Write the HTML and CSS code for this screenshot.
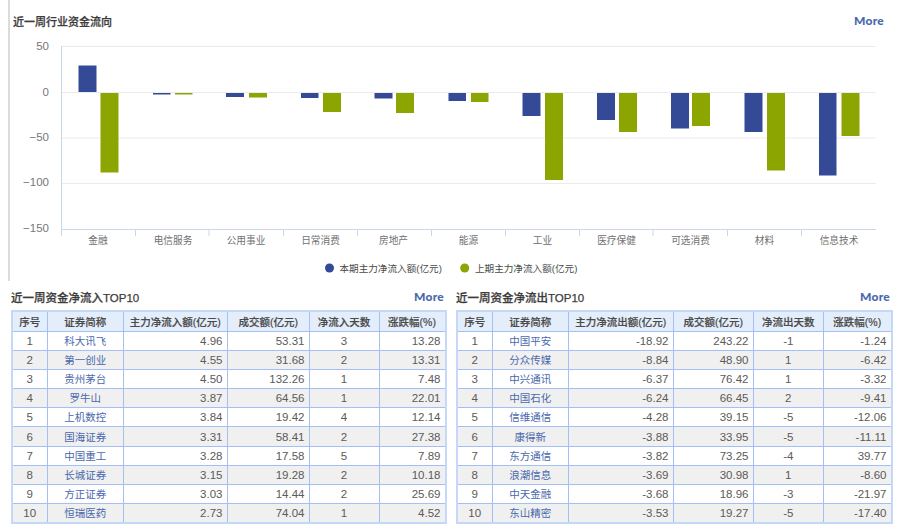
FILE: index.html
```html
<!DOCTYPE html>
<html lang="zh-CN">
<head>
  <meta charset="UTF-8" />
  <title>资金流向</title>
  <link rel="stylesheet" href="styles.css">
</head>
<body>

<!-- 行业资金流向 -->
<div class="chart-panel">
  <div class="panel-head chart-head">
    <h2>近一周行业资金流向</h2>
    <a class="more">More</a>
  </div>
  <svg class="chart" width="890" height="245" viewBox="10 36 890 245">
    <g class="grid">
      <line x1="61.5" y1="46.5" x2="876" y2="46.5"/>
      <line x1="61.5" y1="92.5" x2="876" y2="92.5"/>
      <line x1="61.5" y1="138" x2="876" y2="138"/>
      <line x1="61.5" y1="183.5" x2="876" y2="183.5"/>
    </g>
    <g class="axis">
      <line x1="61.5" y1="46" x2="61.5" y2="236"/>
      <line x1="61.5" y1="229.5" x2="876" y2="229.5"/>
      <line x1="135.5" y1="229" x2="135.5" y2="236"/>
      <line x1="209" y1="229" x2="209" y2="236"/>
      <line x1="283.5" y1="229" x2="283.5" y2="236"/>
      <line x1="357.5" y1="229" x2="357.5" y2="236"/>
      <line x1="431.5" y1="229" x2="431.5" y2="236"/>
      <line x1="505.5" y1="229" x2="505.5" y2="236"/>
      <line x1="579.5" y1="229" x2="579.5" y2="236"/>
      <line x1="653" y1="229" x2="653" y2="236"/>
      <line x1="727.5" y1="229" x2="727.5" y2="236"/>
      <line x1="801.5" y1="229" x2="801.5" y2="236"/>
    </g>
    <g class="y-labels">
      <text x="49" y="50">50</text>
      <text x="49" y="96">0</text>
      <text x="49" y="141">−50</text>
      <text x="49" y="186">−100</text>
      <text x="49" y="232">−150</text>
    </g>
    <g class="bars-now">
      <rect x="78.5" y="65.5" width="18" height="26.5"/>
      <rect x="153" y="93" width="17.5" height="1.5"/>
      <rect x="226" y="93" width="18" height="4"/>
      <rect x="301" y="93" width="17.5" height="5"/>
      <rect x="374.5" y="93" width="18" height="5.5"/>
      <rect x="448.5" y="93" width="17.5" height="8"/>
      <rect x="522.5" y="93" width="18" height="23"/>
      <rect x="597" y="93" width="18" height="27"/>
      <rect x="671" y="93" width="18" height="35.5"/>
      <rect x="744.5" y="93" width="18" height="39"/>
      <rect x="819" y="93" width="17.5" height="82.5"/>
    </g>
    <g class="bars-prev">
      <rect x="100.5" y="93" width="18" height="79.5"/>
      <rect x="175" y="93" width="17.5" height="1.5"/>
      <rect x="249" y="93" width="18" height="4.5"/>
      <rect x="323" y="93" width="18" height="19"/>
      <rect x="396" y="93" width="18" height="20"/>
      <rect x="471" y="93" width="17.5" height="9"/>
      <rect x="545" y="93" width="18" height="87"/>
      <rect x="619" y="93" width="18" height="39"/>
      <rect x="692" y="93" width="18" height="33"/>
      <rect x="767" y="93" width="18" height="77.5"/>
      <rect x="841.5" y="93" width="18" height="43"/>
    </g>
    <g class="x-labels">
      <text x="98" y="244">金融</text>
      <text x="173" y="244">电信服务</text>
      <text x="246" y="244">公用事业</text>
      <text x="320.5" y="244">日常消费</text>
      <text x="393.5" y="244">房地产</text>
      <text x="468.5" y="244">能源</text>
      <text x="542.5" y="244">工业</text>
      <text x="616.5" y="244">医疗保健</text>
      <text x="690.5" y="244">可选消费</text>
      <text x="764.5" y="244">材料</text>
      <text x="839" y="244">信息技术</text>
    </g>
    <circle class="dot-now" cx="329.5" cy="268" r="4.5"/>
    <text class="legend" x="339.5" y="272">本期主力净流入额(亿元)</text>
    <circle class="dot-prev" cx="464.7" cy="268" r="4.5"/>
    <text class="legend" x="475" y="272">上期主力净流入额(亿元)</text>
  </svg>
</div>

<div class="tables">

  <!-- 净流入 TOP10 -->
  <div class="rank inflow">
    <div class="panel-head">
      <h3>近一周资金净流入TOP10</h3>
      <a class="more">More</a>
    </div>
    <table>
      <colgroup><col class="c-no"><col class="c-name"><col class="c-flow"><col class="c-vol"><col class="c-days"><col class="c-chg"></colgroup>
      <thead>
        <tr><th>序号</th><th>证券简称</th><th>主力净流入额(亿元)</th><th>成交额(亿元)</th><th>净流入天数</th><th>涨跌幅(%)</th></tr>
      </thead>
      <tbody>
        <tr><td>1</td><td><a>科大讯飞</a></td><td>4.96</td><td>53.31</td><td>3</td><td>13.28</td></tr>
        <tr><td>2</td><td><a>第一创业</a></td><td>4.55</td><td>31.68</td><td>2</td><td>13.31</td></tr>
        <tr><td>3</td><td><a>贵州茅台</a></td><td>4.50</td><td>132.26</td><td>1</td><td>7.48</td></tr>
        <tr><td>4</td><td><a>罗牛山</a></td><td>3.87</td><td>64.56</td><td>1</td><td>22.01</td></tr>
        <tr><td>5</td><td><a>上机数控</a></td><td>3.84</td><td>19.42</td><td>4</td><td>12.14</td></tr>
        <tr><td>6</td><td><a>国海证券</a></td><td>3.31</td><td>58.41</td><td>2</td><td>27.38</td></tr>
        <tr><td>7</td><td><a>中国重工</a></td><td>3.28</td><td>17.58</td><td>5</td><td>7.89</td></tr>
        <tr><td>8</td><td><a>长城证券</a></td><td>3.15</td><td>19.28</td><td>2</td><td>10.18</td></tr>
        <tr><td>9</td><td><a>方正证券</a></td><td>3.03</td><td>14.44</td><td>2</td><td>25.69</td></tr>
        <tr><td>10</td><td><a>恒瑞医药</a></td><td>2.73</td><td>74.04</td><td>1</td><td>4.52</td></tr>
      </tbody>
    </table>
  </div>

  <!-- 净流出 TOP10 -->
  <div class="rank outflow">
    <div class="panel-head">
      <h3>近一周资金净流出TOP10</h3>
      <a class="more">More</a>
    </div>
    <table>
      <colgroup><col class="c-no"><col class="c-name"><col class="c-flow"><col class="c-vol"><col class="c-days"><col class="c-chg"></colgroup>
      <thead>
        <tr><th>序号</th><th>证券简称</th><th>主力净流出额(亿元)</th><th>成交额(亿元)</th><th>净流出天数</th><th>涨跌幅(%)</th></tr>
      </thead>
      <tbody>
        <tr><td>1</td><td><a>中国平安</a></td><td>-18.92</td><td>243.22</td><td>-1</td><td>-1.24</td></tr>
        <tr><td>2</td><td><a>分众传媒</a></td><td>-8.84</td><td>48.90</td><td>1</td><td>-6.42</td></tr>
        <tr><td>3</td><td><a>中兴通讯</a></td><td>-6.37</td><td>76.42</td><td>1</td><td>-3.32</td></tr>
        <tr><td>4</td><td><a>中国石化</a></td><td>-6.24</td><td>66.45</td><td>2</td><td>-9.41</td></tr>
        <tr><td>5</td><td><a>信维通信</a></td><td>-4.28</td><td>39.15</td><td>-5</td><td>-12.06</td></tr>
        <tr><td>6</td><td><a>康得新</a></td><td>-3.88</td><td>33.95</td><td>-5</td><td>-11.11</td></tr>
        <tr><td>7</td><td><a>东方通信</a></td><td>-3.82</td><td>73.25</td><td>-4</td><td>39.77</td></tr>
        <tr><td>8</td><td><a>浪潮信息</a></td><td>-3.69</td><td>30.98</td><td>1</td><td>-8.60</td></tr>
        <tr><td>9</td><td><a>中天金融</a></td><td>-3.68</td><td>18.96</td><td>-3</td><td>-21.97</td></tr>
        <tr><td>10</td><td><a>东山精密</a></td><td>-3.53</td><td>19.27</td><td>-5</td><td>-17.40</td></tr>
      </tbody>
    </table>
  </div>

</div>

</body>
</html>
```

FILE: styles.css
```css
:root {
  --blue: #344a96;
  --green: #8ca500;
  --link: #4a68ad;
  --text: #5a5a5a;
  --line: #a3bff5;
}

body {
  margin: 0;
  width: 900px;
  height: 530px;
  overflow: hidden;
  background: #fff;
  color: var(--text);
  font-family: "Liberation Sans", "Noto Sans CJK SC", sans-serif;
}

.chart-panel {
  margin-left: 8px;
  height: 281px;
  border-left: 2px solid #dcdcdc;
}

.panel-head {
  display: flex;
  justify-content: space-between;
  align-items: center;
}

.chart-head {
  height: 36px;
  padding: 5px 16px 0 3px;
  box-sizing: border-box;
}

h2, h3 {
  margin: 0;
  color: #3c3c3c;
  font-weight: 500;
  -webkit-text-stroke: 0.25px #3c3c3c;
}

h2 {
  font-size: 11px;
}

h3 {
  font-size: 11.5px;
}

.more {
  color: var(--link);
  font-family: "Lato", sans-serif;
  font-size: 12px;
  font-weight: 900;
  letter-spacing: 0.25px;
}

.chart {
  display: block;
}

.grid line {
  stroke: #ebebeb;
}

.axis line {
  stroke: #ccd6eb;
}

.y-labels text {
  fill: #777;
  font-size: 11.5px;
  text-anchor: end;
}

.x-labels text {
  fill: #707070;
  font-size: 9.7px;
  text-anchor: middle;
}

.bars-now rect,
.dot-now {
  fill: var(--blue);
}

.bars-prev rect,
.dot-prev {
  fill: var(--green);
}

.legend {
  fill: #4a4a4a;
  font-size: 9.6px;
}

.tables {
  display: grid;
  grid-template-columns: 436px 437px;
  column-gap: 9px;
  margin-left: 11px;
}

.rank .panel-head {
  height: 29px;
  padding: 2px 3px 0 0;
  box-sizing: border-box;
}

table {
  width: 100%;
  table-layout: fixed;
  border-collapse: collapse;
  border: 2px solid #c6d8f7;
  font-size: 11.5px;
}

.c-no { width: 35.5px; }
.c-name { width: 76px; }
.c-flow { width: 104px; }
.c-vol { width: 80px; }
.c-days { width: 70px; }

.inflow .c-vol { width: 82px; }
.inflow .c-days { width: 69.5px; }
.outflow .c-flow { width: 105px; }

th, td {
  padding: 0 4.5px 0 4px;
  border: 1px solid var(--line);
  overflow: hidden;
  white-space: nowrap;
}

th {
  height: 19px;
  background: #e4eefb;
  color: #4a4a4a;
  font-size: 10.5px;
  font-weight: 500;
  text-align: center;
  -webkit-text-stroke: 0.2px #4a4a4a;
}

td {
  height: 18.1px;
  line-height: 14px;
  text-align: right;
}

td:nth-child(1),
td:nth-child(2),
td:nth-child(5) {
  text-align: center;
}

td a {
  color: var(--link);
  font-size: 10.5px;
}

tbody tr:nth-child(even) {
  background: #f0f0f0;
}
```
